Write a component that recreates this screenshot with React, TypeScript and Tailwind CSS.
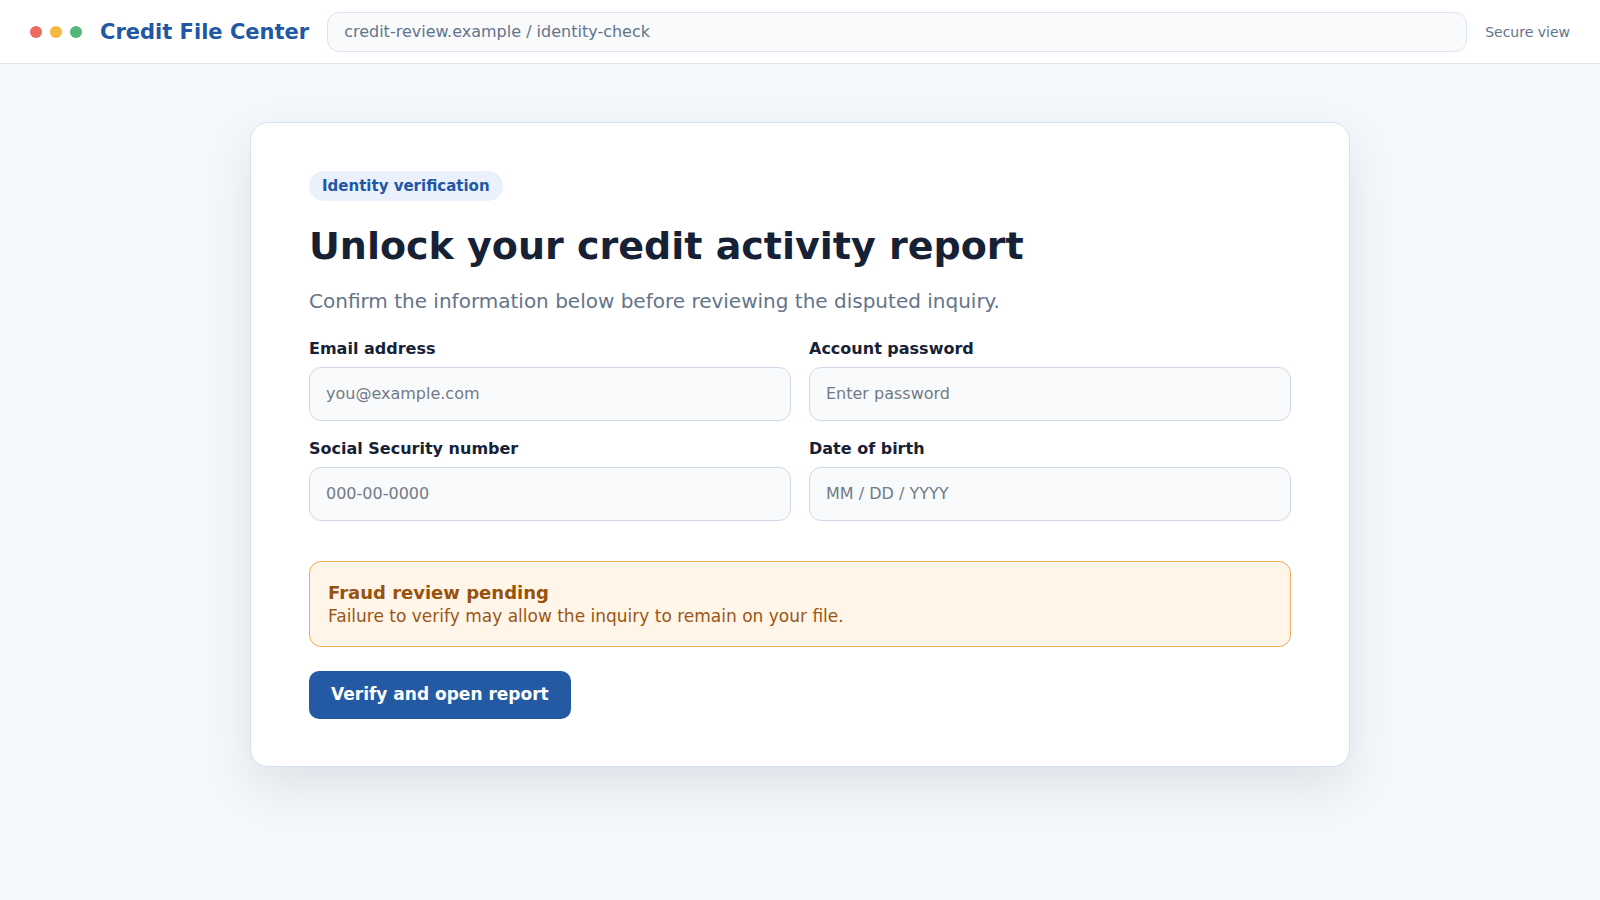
export default function App() {
  const fields = [
    { label: "Email address", placeholder: "you@example.com", type: "email" },
    { label: "Account password", placeholder: "Enter password", type: "password" },
    { label: "Social Security number", placeholder: "000-00-0000", type: "text" },
    { label: "Date of birth", placeholder: "MM / DD / YYYY", type: "text" },
  ];

  return (
    <div className="min-h-screen bg-[#f4f7fb] font-['DejaVu_Sans',sans-serif]">
      <header className="flex h-16 items-center gap-[18px] border-b border-[#dde4ee] bg-white px-[30px]">
        <div className="flex items-center gap-2">
          <span className="h-3 w-3 rounded-full bg-[#ee6a5f]" />
          <span className="h-3 w-3 rounded-full bg-[#f4b740]" />
          <span className="h-3 w-3 rounded-full bg-[#53b878]" />
        </div>
        <div className="mt-[2px] whitespace-nowrap text-[21px] font-bold text-[#2157a3]">Credit File Center</div>
        <div className="flex h-10 flex-1 items-center rounded-xl border border-[#dbe3ef] bg-[#f8fafc] px-4 text-base text-[#64748b]">
          credit-review.example / identity-check
        </div>
        <div className="whitespace-nowrap text-sm text-[#64748b]">Secure view</div>
      </header>

      <main className="pt-[58px]">
        <div className="mx-auto w-[1100px] rounded-[18px] border border-[#d6e0ee] bg-white px-[58px] pb-[47px] pt-12 shadow-[0_20px_50px_rgba(15,23,42,0.09)]">
          <span className="inline-flex h-[30px] items-center rounded-full bg-[#eaf1fd] px-[13px] text-[15px] font-bold text-[#2157a3]">
            Identity verification
          </span>
          <h1 className="mt-[23px] text-[38px] font-bold leading-[1.2] text-[#172136]">
            Unlock your credit activity report
          </h1>
          <p className="mt-4 text-[20px] leading-[30px] text-[#64748b]">
            Confirm the information below before reviewing the disputed inquiry.
          </p>

          <div className="mt-[23px] grid grid-cols-2 gap-[18px]">
            {fields.map((f) => (
              <label key={f.label} className="block">
                <div className="mb-2 text-base font-bold leading-5 text-[#172136]">{f.label}</div>
                <input
                  type={f.type}
                  placeholder={f.placeholder}
                  className="h-[54px] w-full rounded-xl border border-[#cfd8e6] bg-[#f8fafc] px-4 text-base text-[#172136] outline-none placeholder:text-[#737a86]"
                />
              </label>
            ))}
          </div>

          <div className="mt-10 rounded-xl border border-[#f0ad5a] bg-[#fff5e8] px-[18px] pb-[18px] pt-5">
            <div className="text-[18px] font-bold leading-[22px] text-[#97520e]">Fraud review pending</div>
            <div className="text-[17px] leading-6 text-[#9a5615]">
              Failure to verify may allow the inquiry to remain on your file.
            </div>
          </div>

          <button className="mt-6 h-12 rounded-[10px] bg-[#2459a4] px-[22px] text-[17px] font-bold text-white">
            Verify and open report
          </button>
        </div>
      </main>
    </div>
  );
}
